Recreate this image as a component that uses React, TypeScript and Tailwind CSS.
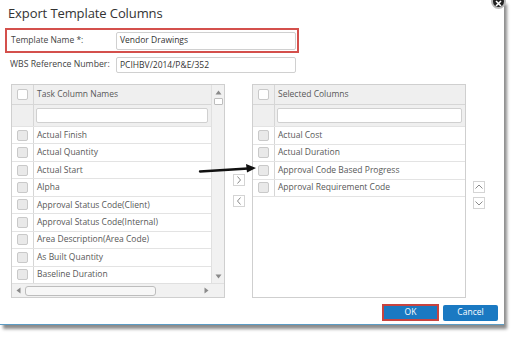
import React from 'react';

const LEFT_ROWS = [
  'Actual Finish',
  'Actual Quantity',
  'Actual Start',
  'Alpha',
  'Approval Status Code(Client)',
  'Approval Status Code(Internal)',
  'Area Description(Area Code)',
  'As Built Quantity',
  'Baseline Duration',
];

const RIGHT_ROWS = [
  'Actual Cost',
  'Actual Duration',
  'Approval Code Based Progress',
  'Approval Requirement Code',
];

function Check({ light }: { light?: boolean }) {
  return (
    <span
      className={
        'block w-[11px] h-[11px] rounded-[2px] border border-[#c9c9c9] ' +
        (light ? 'bg-white' : 'bg-[#e9e9e9]')
      }
    />
  );
}

function Row({ label }: { label: string }) {
  return (
    <div className="flex h-[17.5px] border-t border-[#e3e3e3] bg-white">
      <div className="w-[22px] flex items-center justify-center border-r border-[#d6d6d6]">
        <Check />
      </div>
      <div className="flex-1 flex items-center pl-[3px] whitespace-nowrap overflow-hidden">{label}</div>
    </div>
  );
}

function Header({ title }: { title: string }) {
  return (
    <>
      <div className="flex h-[20px] bg-[#efefef] border-b border-[#d6d6d6]">
        <div className="w-[22px] flex items-center justify-center border-r border-[#d6d6d6]">
          <Check light />
        </div>
        <div className="flex-1 flex items-center pl-[3px]">{title}</div>
      </div>
      <div className="flex h-[21px] bg-[#efefef]">
        <div className="w-[22px] border-r border-[#d6d6d6]" />
        <div className="flex-1 flex items-center pl-[2px] pr-[3px]">
          <div className="w-full h-[15px] bg-white border border-[#d0d0d0] rounded-[2px]" />
        </div>
      </div>
    </>
  );
}

function SmallBtn({ d }: { d: string }) {
  return (
    <div className="w-[12px] h-[12px] border border-[#d4d4d4] bg-white flex items-center justify-center">
      <svg width="8" height="8" viewBox="0 0 8 8">
        <path d={d} fill="none" stroke="#8a8a8a" strokeWidth="1" />
      </svg>
    </div>
  );
}

export default function App() {
  return (
    <div className="relative w-[516px] h-[340px] overflow-hidden bg-white font-['Open_Sans',sans-serif] text-[8.5px] text-[#585858]">
      <div className="w-[504px] h-[325px] flex flex-col bg-white border-b border-[#5c9cc4] shadow-[3px_4px_3px_rgba(0,0,0,0.45)]">
        <h1 className="ml-[8px] mt-[3px] text-[13px] leading-[20px] text-[#333] tracking-[-0.1px]">
          Export Template Columns
        </h1>

        <div className="ml-[5px] mt-[5px] w-[294px] h-[25px] border-2 border-[#d4504c] flex items-center">
          <span className="w-[109px] pl-[4px] text-[8.5px] text-[#444]">Template Name *:</span>
          <div className="w-[180px] h-[18px] border border-[#d0d0d0] rounded-[2px] flex items-center pl-[3px] text-[8.5px] text-[#333]">
            Vendor Drawings
          </div>
        </div>

        <div className="mt-[4px] flex items-center h-[16px]">
          <span className="w-[116px] pl-[10px] text-[8.7px] text-[#444]">WBS Reference Number:</span>
          <div className="w-[180px] h-[16px] border border-[#d0d0d0] rounded-[2px] flex items-center pl-[3px] text-[8.5px] text-[#333]">
            PCIHBV/2014/P&amp;E/352
          </div>
        </div>

        <div className="mt-[11px] ml-[11px] flex">
          {/* left list */}
          <div className="w-[214px] h-[214px] border border-[#cfcfcf] flex flex-col bg-[#f1f1f1]">
            <div className="flex flex-1 min-h-0">
              <div className="w-[199px] flex flex-col">
                <Header title="Task Column Names" />
                {LEFT_ROWS.map((r) => (
                  <Row key={r} label={r} />
                ))}
              </div>
              <div className="flex-1 flex flex-col items-center bg-[#f1f1f1] border-l border-[#e0e0e0]">
                <svg width="7" height="5" viewBox="0 0 7 5" className="mt-[5px]">
                  <path d="M3.5 0.5 L6.5 4.5 L0.5 4.5 Z" fill="#8a8a8a" />
                </svg>
                <div className="mt-[3px] w-[9px] h-[7px] border border-[#bdbdbd] rounded-[1px] bg-white" />
                <div className="flex-1" />
                <svg width="7" height="5" viewBox="0 0 7 5" className="mb-[4px]">
                  <path d="M0.5 0.5 L6.5 0.5 L3.5 4.5 Z" fill="#8a8a8a" />
                </svg>
              </div>
            </div>
            <div className="h-[14px] flex items-center border-t border-[#e0e0e0]">
              <svg width="5" height="7" viewBox="0 0 5 7" className="ml-[4px]">
                <path d="M4.5 0.5 L4.5 6.5 L0.5 3.5 Z" fill="#8a8a8a" />
              </svg>
              <div className="ml-[4px] w-[131px] h-[10px] border border-[#bdbdbd] rounded-[3px] bg-[#f7f7f7]" />
              <svg width="5" height="7" viewBox="0 0 5 7" className="ml-[48px]">
                <path d="M0.5 0.5 L0.5 6.5 L4.5 3.5 Z" fill="#8a8a8a" />
              </svg>
            </div>
          </div>

          {/* move buttons */}
          <div className="w-[27px] pl-[8px] pt-[90px] flex flex-col gap-[9px]">
            <SmallBtn d="M2.5 0.5 L5.5 4 L2.5 7.5" />
            <SmallBtn d="M5.5 0.5 L2.5 4 L5.5 7.5" />
          </div>

          {/* right list */}
          <div className="w-[214px] h-[214px] border border-[#cfcfcf] flex flex-col bg-white">
            <Header title="Selected Columns" />
            {RIGHT_ROWS.map((r) => (
              <Row key={r} label={r} />
            ))}
            <div className="border-t border-[#e3e3e3]" />
          </div>

          {/* order buttons */}
          <div className="pl-[7px] pt-[97px] flex flex-col gap-[4px]">
            <SmallBtn d="M0.5 5.5 L4 2 L7.5 5.5" />
            <SmallBtn d="M0.5 2.5 L4 6 L7.5 2.5" />
          </div>
        </div>

        <div className="mt-[6px] flex justify-end items-center pr-[6px]">
          <div className="w-[57px] h-[17px] border-2 border-[#c8433f]">
            <button className="w-full h-full bg-[#1a79c2] text-white text-[8.5px] font-medium leading-none">
              OK
            </button>
          </div>
          <button className="ml-[4px] w-[55px] h-[16px] rounded-[2px] bg-[#1a79c2] text-white text-[8.5px] font-medium leading-none">
            Cancel
          </button>
        </div>
      </div>

      {/* annotation arrow */}
      <svg className="absolute left-[198px] top-[162px]" width="62" height="14" viewBox="0 0 62 14">
        <path d="M2 9.5 L50 6.5" stroke="#111" strokeWidth="2.4" strokeLinecap="round" />
        <path d="M58 6 L48 2 L49 10.5 Z" fill="#111" />
      </svg>

      {/* close button */}
      <div className="absolute left-[491px] top-[-6px] w-[15px] h-[15px] rounded-full bg-[#222] border-2 border-[#bbb] flex items-center justify-center">
        <svg width="7" height="7" viewBox="0 0 7 7" className="mt-[4px]">
          <path d="M1 1 L6 6 M6 1 L1 6" stroke="white" strokeWidth="1.6" />
        </svg>
      </div>
    </div>
  );
}
